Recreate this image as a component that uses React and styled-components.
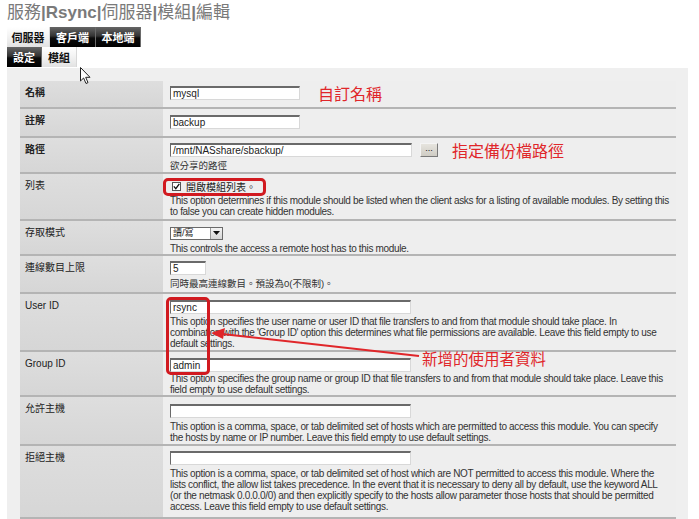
import React from 'react';
import styled, { createGlobalStyle } from 'styled-components';

const GlobalStyle = createGlobalStyle`
	html, body {
		margin: 0;
		padding: 0;
		background: #fff;
	}
	body {
		font-family: "Liberation Sans", "Noto Sans CJK TC", sans-serif;
		color: #222;
	}
`;

const CJK = `"Liberation Sans", "Noto Sans CJK TC", sans-serif`;

const Page = styled.div`
	position: relative;
	width: 699px;
	height: 519px;
	overflow: hidden;
	padding: 3px 11px 0 7px;
	box-sizing: border-box;
`;

const Title = styled.h1`
	margin: 0 0 5px 0;
	height: 19px;
	font-family: ${CJK};
	font-size: 17px;
	font-weight: normal;
	line-height: 19px;
	color: #7a7a7a;
	white-space: nowrap;
	b {
		font-weight: bold;
	}
`;

const TabBar = styled.div`
	display: flex;
	height: 20px;
`;

const Tab = styled.div`
	width: ${(p) => p.$w}px;
	height: 20px;
	box-sizing: border-box;
	display: flex;
	align-items: center;
	justify-content: center;
	font-family: ${CJK};
	font-size: 11px;
	font-weight: bold;
	border-right: 1px solid ${(p) => (p.$active ? '#d8d8d8' : '#6a6a6a')};
	color: ${(p) => (p.$active ? '#111' : '#fff')};
	background: ${(p) =>
		p.$active
			? 'linear-gradient(#ffffff, #f2f2f2 50%, #e2e2e2)'
			: 'linear-gradient(#666666, #333333 45%, #0c0c0c 55%, #000000)'};
`;

const Panel = styled.div`
	margin-top: 1px;
	background: #efefef;
	padding: 13px 12px 0 13px;
	height: 460px;
`;

const Row = styled.div`
	display: grid;
	grid-template-columns: 143px 1fr;
	border-bottom: 2px solid #b4b4b4;
`;

const Label = styled.div`
	background: linear-gradient(#dedede, #d6d6d6);
	padding: 6px 5px 4px 5px;
	font-family: ${CJK};
	font-size: 10px;
	line-height: 12px;
	font-weight: ${(p) => (p.$required ? 'bold' : 'normal')};
	color: #222;
`;

const Value = styled.div`
	padding: ${(p) => p.$top}px 7px ${(p) => p.$bottom}px 7px;
	background: #eeeeee;
`;

const Line = styled.div`
	display: flex;
	align-items: center;
	height: 14px;
`;

const TextInput = styled.div`
	width: ${(p) => p.$w}px;
	height: 14px;
	box-sizing: border-box;
	background: #fff;
	border: 1px solid;
	border-color: #6a6a6a #d8d8d8 #d8d8d8 #6a6a6a;
	border-top-width: 2px;
	padding-left: 2px;
	font-family: ${CJK};
	font-size: 10px;
	line-height: 11px;
	color: #222;
`;

const BrowseButton = styled.div`
	margin-left: 8px;
	width: 18px;
	height: 14px;
	box-sizing: border-box;
	border: 1px solid;
	border-color: #f4f4f4 #7a7a7a #7a7a7a #f4f4f4;
	background: linear-gradient(#e6e4de, #cfccc4);
	font-size: 9px;
	line-height: 9px;
	text-align: center;
	color: #111;
`;

const Note = styled.span`
	margin-left: ${(p) => p.$gap}px;
	font-family: "Noto Sans CJK TC", sans-serif;
	font-size: 16px;
	line-height: 14px;
	color: #e0262a;
	white-space: nowrap;
`;

const Hint = styled.div`
	margin-top: ${(p) => p.$gap}px;
	font-family: ${CJK};
	font-size: ${(p) => (p.$cjk ? 9.5 : 10)}px;
	line-height: 11px;
	color: #333;
	letter-spacing: ${(p) => (p.$cjk ? 0 : -0.33)}px;
	span {
		display: block;
		white-space: nowrap;
	}
`;

const Check = styled.span`
	width: 9px;
	height: 9px;
	box-sizing: border-box;
	margin: 0 5px 0 2px;
	border: 1px solid #555;
	background: #fff;
	display: inline-flex;
	align-items: center;
	justify-content: center;
`;

const CheckText = styled.span`
	font-family: ${CJK};
	font-size: 10px;
	color: #222;
`;

const Select = styled.div`
	width: 53px;
	height: 13px;
	box-sizing: border-box;
	border: 1px solid #6a6a6a;
	background: #fff;
	display: flex;
	align-items: stretch;
	font-family: ${CJK};
	font-size: 9px;
	line-height: 11px;
`;

const SelectText = styled.span`
	flex: 1;
	padding-left: 2px;
`;

const SelectArrow = styled.span`
	width: 11px;
	border-left: 1px solid #999;
	background: linear-gradient(#f4f4f4, #d6d6d6);
	display: flex;
	align-items: center;
	justify-content: center;
`;

const RedBox = styled.div`
	position: absolute;
	left: ${(p) => p.$x}px;
	top: ${(p) => p.$y}px;
	width: ${(p) => p.$w}px;
	height: ${(p) => p.$h}px;
	box-sizing: border-box;
	border: 3px solid #d11a20;
	border-radius: 5px;
`;

const Callout = styled.div`
	position: absolute;
	left: 422px;
	top: 349px;
	font-family: "Noto Sans CJK TC", sans-serif;
	font-size: 15.5px;
	line-height: 18px;
	color: #e0262a;
	white-space: nowrap;
`;

const Overlay = styled.svg`
	position: absolute;
	left: 0;
	top: 0;
	pointer-events: none;
`;

const Desc = ({ lines, cjk, gap = 3 }) => (
	<Hint $cjk={cjk} $gap={gap}>
		{lines.map((l, i) => (
			<span key={i}>{l}</span>
		))}
	</Hint>
);

const Field = ({ label, required, children, top = 5, bottom = 5 }) => (
	<Row>
		<Label $required={required}>{label}</Label>
		<Value $top={top} $bottom={bottom}>
			{children}
		</Value>
	</Row>
);

const App = () => {
	return (
		<>
			<GlobalStyle />
			<Page>
				<Title>
					服務<b>|Rsync|</b>伺服器<b>|</b>模組<b>|</b>編輯
				</Title>
				<TabBar>
					<Tab $w={43} $active>伺服器</Tab>
					<Tab $w={46}>客戶端</Tab>
					<Tab $w={45}>本地端</Tab>
				</TabBar>
				<TabBar>
					<Tab $w={35}>設定</Tab>
					<Tab $w={35} $active>模組</Tab>
				</TabBar>
				<Panel>
					<Field label="名稱" required bottom={7}>
						<Line>
							<TextInput $w={130}>mysql</TextInput>
							<Note $gap={18}>自訂名稱</Note>
						</Line>
					</Field>
					<Field label="註解" required top={6} bottom={7}>
						<Line>
							<TextInput $w={130}>backup</TextInput>
						</Line>
					</Field>
					<Field label="路徑" required bottom={1}>
						<Line>
							<TextInput $w={242}>/mnt/NASshare/sbackup/</TextInput>
							<BrowseButton>...</BrowseButton>
							<Note $gap={14}>指定備份檔路徑</Note>
						</Line>
						<Desc cjk lines={['欲分享的路徑']} />
					</Field>
					<Field label="列表" bottom={2}>
						<Line>
							<Check>
								<svg width="7" height="7" viewBox="0 0 7 7">
									<path d="M0.8 3.4 L2.8 5.6 L6.3 0.8" fill="none" stroke="#111" strokeWidth="1.3" />
								</svg>
							</Check>
							<CheckText>開啟模組列表。</CheckText>
						</Line>
						<Desc
							gap={2}
							lines={[
								'This option determines if this module should be listed when the client asks for a listing of available modules. By setting this',
								'to false you can create hidden modules.',
							]}
						/>
					</Field>
					<Field label="存取模式" bottom={0}>
						<Line>
							<Select>
								<SelectText>讀/寫</SelectText>
								<SelectArrow>
									<svg width="7" height="4" viewBox="0 0 7 4">
										<path d="M0 0 H7 L3.5 4 Z" fill="#111" />
									</svg>
								</SelectArrow>
							</Select>
						</Line>
						<Desc lines={['This controls the access a remote host has to this module.']} />
					</Field>
					<Field label="連線數目上限" bottom={3}>
						<Line>
							<TextInput $w={36}>5</TextInput>
						</Line>
						<Desc cjk lines={['同時最高連線數目。預設為0(不限制)。']} />
					</Field>
					<Field label="User ID" top={6} bottom={1}>
						<Line>
							<TextInput $w={241}>rsync</TextInput>
						</Line>
						<Desc
							gap={2}
							lines={[
								'This option specifies the user name or user ID that file transfers to and from that module should take place. In',
								"combination with the 'Group ID' option this determines what file permissions are available. Leave this field empty to use",
								'default settings.',
							]}
						/>
					</Field>
					<Field label="Group ID" top={6} bottom={0}>
						<Line>
							<TextInput $w={241}>admin</TextInput>
						</Line>
						<Desc
							gap={1}
							lines={[
								'This option specifies the group name or group ID that file transfers to and from that module should take place. Leave this',
								'field empty to use default settings.',
							]}
						/>
					</Field>
					<Field label="允許主機" top={7} bottom={1}>
						<Line>
							<TextInput $w={241} />
						</Line>
						<Desc
							lines={[
								'This option is a comma, space, or tab delimited set of hosts which are permitted to access this module. You can specify',
								'the hosts by name or IP number. Leave this field empty to use default settings.',
							]}
						/>
					</Field>
					<Field label="拒絕主機">
						<Line>
							<TextInput $w={241} />
						</Line>
						<Desc
							lines={[
								'This option is a comma, space, or tab delimited set of host which are NOT permitted to access this module. Where the',
								'lists conflict, the allow list takes precedence. In the event that it is necessary to deny all by default, use the keyword ALL',
								'(or the netmask 0.0.0.0/0) and then explicitly specify to the hosts allow parameter those hosts that should be permitted',
								'access. Leave this field empty to use default settings.',
							]}
						/>
					</Field>
				</Panel>

				{/* annotations drawn over the form */}
				<RedBox $x={163} $y={178} $w={103} $h={18} />
				<RedBox $x={166} $y={297} $w={44} $h={78} />
				<Callout>新增的使用者資料</Callout>
				<Overlay width="699" height="519" viewBox="0 0 699 519">
					<line x1="419" y1="356" x2="222" y2="334" stroke="#e0262a" strokeWidth="2" />
					<path d="M211 333 L225 328 L223 339 Z" fill="#e0262a" />
					<path
						d="M80.5 67.5 L80.5 81 L83.6 78 L86 83.5 L88 82.6 L85.7 77.3 L90 77.3 Z"
						fill="#fff"
						stroke="#222"
						strokeWidth="1"
						strokeLinejoin="round"
					/>
				</Overlay>
			</Page>
		</>
	);
};

export default App;
